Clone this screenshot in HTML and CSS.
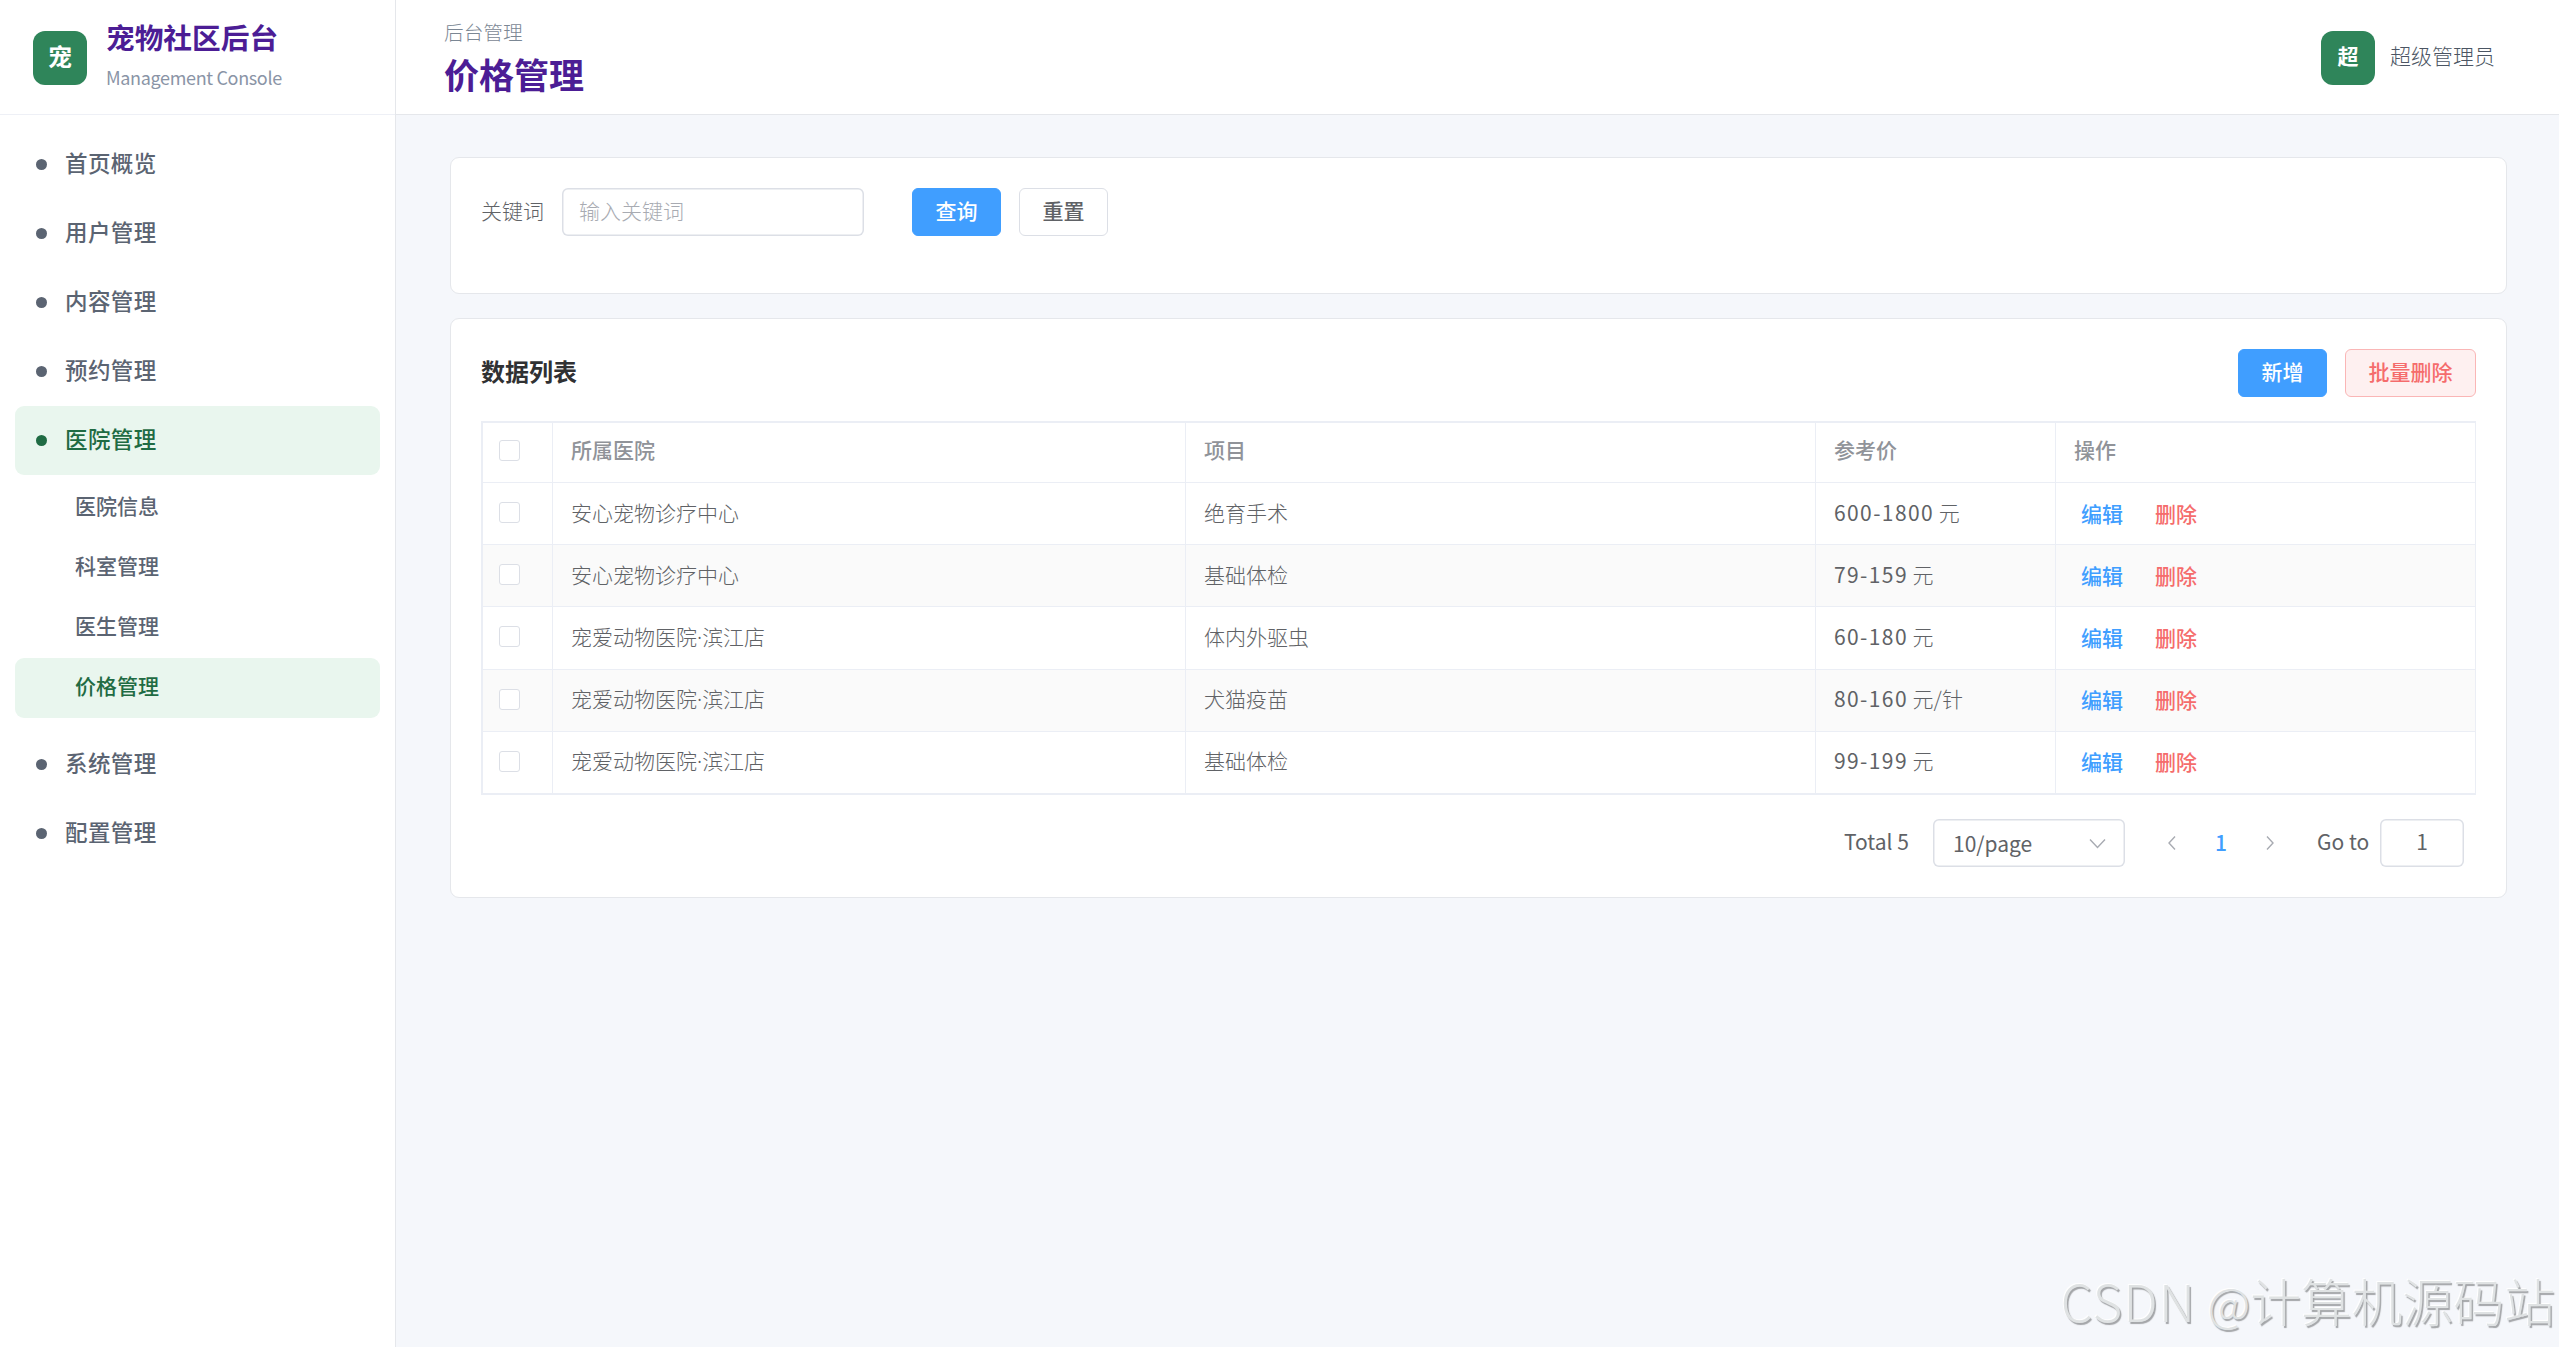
FILE: index.html
```html
<!DOCTYPE html>
<html lang="zh-CN">
<head>
<meta charset="utf-8">
<title>价格管理</title>
<link rel="stylesheet" href="styles.css">
</head>
<body>
<div class="layout">
  <aside class="sidebar">
    <div class="brand">
      <div class="logo">宠</div>
      <div class="brand-text">
        <div class="brand-title">宠物社区后台</div>
        <div class="brand-sub">Management Console</div>
      </div>
    </div>
    <nav class="nav">
      <a class="nav-item"><i class="dot"></i><span>首页概览</span></a>
      <a class="nav-item"><i class="dot"></i><span>用户管理</span></a>
      <a class="nav-item"><i class="dot"></i><span>内容管理</span></a>
      <a class="nav-item"><i class="dot"></i><span>预约管理</span></a>
      <a class="nav-item active"><i class="dot"></i><span>医院管理</span></a>
      <div class="sub-nav">
        <a class="sub-item">医院信息</a>
        <a class="sub-item">科室管理</a>
        <a class="sub-item">医生管理</a>
        <a class="sub-item active">价格管理</a>
      </div>
      <a class="nav-item"><i class="dot"></i><span>系统管理</span></a>
      <a class="nav-item"><i class="dot"></i><span>配置管理</span></a>
    </nav>
  </aside>
  <div class="main">
    <header class="topbar">
      <div>
        <div class="crumb">后台管理</div>
        <h1 class="page-title">价格管理</h1>
      </div>
      <div class="user"><div class="logo avatar">超</div><span>超级管理员</span></div>
    </header>
    <main class="content">
      <section class="card search">
        <label class="label">关键词</label>
        <div class="input keyword">输入关键词</div>
        <button class="btn primary">查询</button>
        <button class="btn">重置</button>
      </section>
      <section class="card list">
        <div class="list-head">
          <h2 class="list-title">数据列表</h2>
          <div class="actions">
            <button class="btn primary">新增</button>
            <button class="btn danger">批量删除</button>
          </div>
        </div>
        <table class="table">
          <colgroup><col class="c-check"><col class="c-hospital"><col class="c-item"><col class="c-price"><col></colgroup>
          <thead>
            <tr><th><i class="check"></i></th><th>所属医院</th><th>项目</th><th>参考价</th><th>操作</th></tr>
          </thead>
          <tbody>
            <tr><td><i class="check"></i></td><td>安心宠物诊疗中心</td><td>绝育手术</td><td><span class="num">600-1800</span> 元</td><td><a class="link">编辑</a><a class="link del">删除</a></td></tr>
            <tr><td><i class="check"></i></td><td>安心宠物诊疗中心</td><td>基础体检</td><td><span class="num">79-159</span> 元</td><td><a class="link">编辑</a><a class="link del">删除</a></td></tr>
            <tr><td><i class="check"></i></td><td>宠爱动物医院<span class="mid">·</span>滨江店</td><td>体内外驱虫</td><td><span class="num">60-180</span> 元</td><td><a class="link">编辑</a><a class="link del">删除</a></td></tr>
            <tr><td><i class="check"></i></td><td>宠爱动物医院<span class="mid">·</span>滨江店</td><td>犬猫疫苗</td><td><span class="num">80-160</span> 元/针</td><td><a class="link">编辑</a><a class="link del">删除</a></td></tr>
            <tr><td><i class="check"></i></td><td>宠爱动物医院<span class="mid">·</span>滨江店</td><td>基础体检</td><td><span class="num">99-199</span> 元</td><td><a class="link">编辑</a><a class="link del">删除</a></td></tr>
          </tbody>
        </table>
        <div class="pager">
          <span class="total">Total 5</span>
          <div class="input size">10/page
            <svg width="21" height="21" viewBox="0 0 21 21"><path d="M3 6.5 10.5 14.5 18 6.5"/></svg>
          </div>
          <div class="pages">
            <svg width="18" height="18" viewBox="0 0 18 18"><path d="M12 2.5 6 9 12 15.5"/></svg>
            <span class="current">1</span>
            <svg width="18" height="18" viewBox="0 0 18 18"><path d="M6 2.5 12 9 6 15.5"/></svg>
          </div>
          <span class="goto">Go to</span>
          <div class="input jump">1</div>
        </div>
      </section>
    </main>
  </div>
</div>
<div class="watermark"><span class="latin">CSDN</span> <span class="at">@</span>计算机源码站</div>
</body>
</html>
```
FILE: styles.css
```css
* { box-sizing: border-box; }

body {
  margin: 0;
  background: #f5f7fb;
  color: #606266;
  font-family: "Noto Sans CJK SC", "Noto Sans", sans-serif;
  font-size: 21px;
  font-weight: 300;
  line-height: 30px;
}

.layout { display: flex; height: 1347px; }

.sidebar {
  width: 396px;
  flex: none;
  background: #fff;
  border-right: 1px solid #e5e7eb;
}

.brand {
  display: flex;
  align-items: flex-start;
  gap: 19px;
  height: 115px;
  padding: 31px 0 0 33px;
  border-bottom: 1px solid #eef0f6;
}

.logo {
  width: 54px;
  height: 54px;
  flex: none;
  border-radius: 12px;
  background: #2f855a;
  color: #fff;
  font-size: 24px;
  font-weight: 700;
  line-height: 50px;
  text-align: center;
}

.brand-text { margin-top: -19px; }

.brand-title {
  color: #4c1d95;
  font-size: 28.7px;
  font-weight: 700;
  line-height: 50px;
}

.brand-sub {
  color: #8a94a6;
  font-size: 18px;
  font-weight: 400;
  letter-spacing: -0.34px;
  white-space: nowrap;
}

.nav { padding: 15px; }

.nav-item {
  display: flex;
  align-items: center;
  gap: 18px;
  height: 69px;
  padding-left: 21px;
  border-radius: 9px;
  color: #5b6472;
  font-size: 22.5px;
  font-weight: 500;
  letter-spacing: 0.4px;
}

.nav-item span { padding-bottom: 5px; }

.dot {
  width: 11px;
  height: 11px;
  border-radius: 50%;
  background: currentColor;
}

.sub-nav { padding: 3px 0 12px; }

.sub-item {
  display: block;
  height: 60px;
  padding-left: 60px;
  border-radius: 9px;
  color: #5b6472;
  font-weight: 500;
  line-height: 54px;
}

.nav-item.active, .sub-item.active { background: #e9f6ee; color: #1f6b43; }

.main { flex: 1; min-width: 0; }

.topbar {
  display: flex;
  align-items: center;
  justify-content: space-between;
  height: 115px;
  padding: 2px 64px 0 48px;
  background: #fff;
  border-bottom: 1px solid #e5e7eb;
}

.crumb {
  color: #7b8794;
  font-size: 19.7px;
  line-height: 29px;
}

.page-title {
  margin: 2px 0 0;
  color: #4c1d95;
  font-size: 35px;
  font-weight: 700;
  line-height: 52px;
}

.user { display: flex; gap: 15px; color: #4b5563; line-height: 49px; }
.avatar { font-size: 21px; line-height: 49px; }

.content {
  display: flex;
  flex-direction: column;
  gap: 24px;
  padding: 42px 52px 0 54px;
}

.card {
  padding: 30px;
  border: 1px solid #e5e7eb;
  border-radius: 9px;
  background: #fff;
}

.search { display: flex; align-items: flex-start; height: 137px; }
.label { width: 81px; line-height: 44px; }

.input {
  height: 48px;
  padding-left: 17px;
  border-radius: 6px;
  box-shadow: inset 0 0 0 1.5px #dcdfe6;
  line-height: 44px;
}

.keyword { width: 302px; margin-right: 48px; color: #a8abb2; }

.btn {
  height: 48px;
  padding: 0 22.5px 4px;
  border: 1px solid #dcdfe6;
  border-radius: 6px;
  background: #fff;
  color: #606266;
  font: 500 21px/30px "Noto Sans CJK SC", sans-serif;
}

.btn + .btn { margin-left: 18px; }
.btn.primary { border-color: #409eff; background: #409eff; color: #fff; }
.btn.danger { border-color: #fab6b6; background: #fef0f0; color: #f56c6c; }

.list { height: 580px; }
.list-head { display: flex; justify-content: space-between; height: 72px; }

.list-title {
  margin: 0;
  color: #303133;
  font-size: 24px;
  font-weight: 600;
  line-height: 44px;
}

.actions { display: flex; }

.table {
  width: 1995px;
  height: 374px;
  table-layout: fixed;
  border: solid #ebeef5;
  border-width: 2px 1px 1px 2px;
  border-spacing: 0;
}

.c-check { width: 70px; }
.c-hospital { width: 633px; }
.c-item { width: 630px; }
.c-price { width: 240px; }

th, td {
  height: 62px;
  padding: 0 0 4px 18px;
  border: solid #ebeef5;
  border-width: 0 1px 1px 0;
  text-align: left;
}

th { height: 60px; padding-bottom: 8px; color: #909399; font-weight: 500; }
th:last-child, td:last-child { border-right: 0; padding-bottom: 2px; }
th:last-child { padding-bottom: 8px; }
th:first-child { padding: 0 0 4px 16px; }
td:first-child { padding: 0 0 2px 16px; }
tbody tr:nth-child(even) { background: #fafafa; }

.check {
  display: block;
  width: 21px;
  height: 21px;
  border: 1px solid #dcdfe6;
  border-radius: 3px;
  background: #fff;
}

.mid { font-family: "Noto Sans", sans-serif; line-height: 1; }
.num { font-weight: 400; letter-spacing: 1.4px; }
.link { margin-left: 7px; color: #409eff; font-weight: 500; }
.link.del { margin-left: 32px; color: #f56c6c; }

.pager {
  display: flex;
  align-items: center;
  justify-content: flex-end;
  height: 48px;
  margin-top: 24px;
  padding-right: 12px;
  font-weight: 400;
  line-height: 45px;
}

.total, .goto { flex: none; padding-bottom: 4px; white-space: nowrap; }
.total { width: 89px; }

.size {
  display: flex;
  align-items: center;
  justify-content: space-between;
  width: 192px;
  padding: 0 17px 0 20px;
  line-height: 45px;
}

.pager svg { fill: none; stroke: #a8abb2; stroke-width: 1.4; }

.pages {
  display: flex;
  align-items: center;
  justify-content: space-between;
  width: 116px;
  margin: 0 38px;
}

.current { padding-bottom: 2px; color: #409eff; font-weight: 500; }
.goto { width: 63px; }
.jump { width: 84px; padding: 0; line-height: 45px; text-align: center; }

.watermark {
  position: absolute;
  right: 4px;
  bottom: 7px;
  color: #dfe2e3;
  font-size: 50.8px;
  line-height: 76px;
  white-space: nowrap;
  text-shadow: 1.5px 1.5px 1px #a3a5a8, -1px -1px 1px #fff;
}

.latin { letter-spacing: 1.3px; }
.at { font-size: 47px; }
```
